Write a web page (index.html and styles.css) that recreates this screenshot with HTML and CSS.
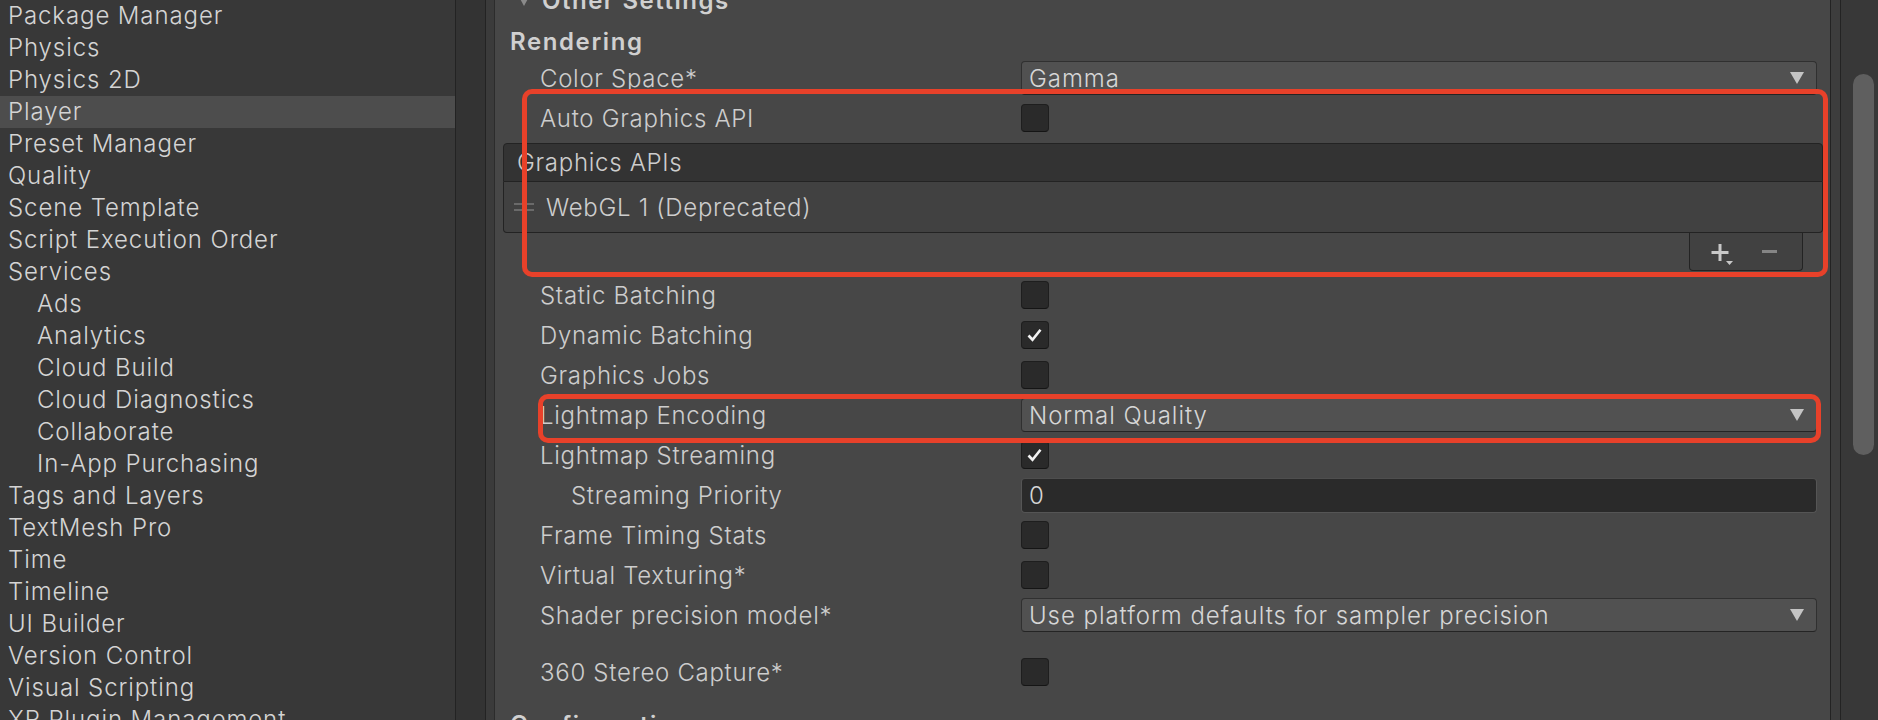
FILE: index.html
```html
<!DOCTYPE html>
<html lang="en">
<head>
<meta charset="utf-8">
<title>Project Settings - Player</title>
<link rel="stylesheet" href="styles.css">
</head>
<body>
<div class="app">
  <nav class="sidebar">
    <div class="item">Package Manager</div>
    <div class="item">Physics</div>
    <div class="item">Physics 2D</div>
    <div class="item selected">Player</div>
    <div class="item">Preset Manager</div>
    <div class="item">Quality</div>
    <div class="item">Scene Template</div>
    <div class="item">Script Execution Order</div>
    <div class="item">Services</div>
    <div class="item sub">Ads</div>
    <div class="item sub">Analytics</div>
    <div class="item sub">Cloud Build</div>
    <div class="item sub">Cloud Diagnostics</div>
    <div class="item sub">Collaborate</div>
    <div class="item sub">In-App Purchasing</div>
    <div class="item">Tags and Layers</div>
    <div class="item">TextMesh Pro</div>
    <div class="item">Time</div>
    <div class="item">Timeline</div>
    <div class="item">UI Builder</div>
    <div class="item">Version Control</div>
    <div class="item">Visual Scripting</div>
    <div class="item">XR Plugin Management</div>
  </nav>
  <div class="gutter"></div>
  <div class="gutter2"></div>
  <main class="inspector">
    <div class="scroll">
      <div class="foldout"><span class="tri"></span>Other Settings</div>
      <div class="section">Rendering</div>

      <div class="row"><span class="label">Color Space*</span><div class="dropdown"><span>Gamma</span><span class="arrow"></span></div></div>
      <div class="row"><span class="label">Auto Graphics API</span><div class="checkbox"></div></div>

      <div class="list">
        <div class="list-head">Graphics APIs</div>
        <div class="list-body">
          <span class="handle"></span><span>WebGL 1 (Deprecated)</span>
        </div>
        <div class="list-foot">
          <span class="plus"><svg width="24" height="24" viewBox="0 0 24 24"><path d="M10 2v17M1.5 10.5h17" stroke="#c8c8c8" stroke-width="3" fill="none"/><path d="M16 19h7l-3.5 4z" fill="#c8c8c8"/></svg></span>
          <span class="minus"></span>
        </div>
      </div>

      <div class="row gap-top"><span class="label">Static Batching</span><div class="checkbox"></div></div>
      <div class="row"><span class="label">Dynamic Batching</span><div class="checkbox checked"><svg width="28" height="28" viewBox="0 0 28 28"><path d="M7.5 14.5l4 4.2 8-10" stroke="#f2f2f2" stroke-width="2.6" fill="none"/></svg></div></div>
      <div class="row"><span class="label">Graphics Jobs</span><div class="checkbox"></div></div>
      <div class="row"><span class="label">Lightmap Encoding</span><div class="dropdown"><span>Normal Quality</span><span class="arrow"></span></div></div>
      <div class="row"><span class="label">Lightmap Streaming</span><div class="checkbox checked"><svg width="28" height="28" viewBox="0 0 28 28"><path d="M7.5 14.5l4 4.2 8-10" stroke="#f2f2f2" stroke-width="2.6" fill="none"/></svg></div></div>
      <div class="row indent"><span class="label">Streaming Priority</span><div class="textfield">0</div></div>
      <div class="row"><span class="label">Frame Timing Stats</span><div class="checkbox"></div></div>
      <div class="row"><span class="label">Virtual Texturing*</span><div class="checkbox"></div></div>
      <div class="row"><span class="label">Shader precision model*</span><div class="dropdown"><span>Use platform defaults for sampler precision</span><span class="arrow"></span></div></div>
      <div class="row gap-big"><span class="label">360 Stereo Capture*</span><div class="checkbox"></div></div>

      <div class="section config">Configuration</div>
    </div>
  </main>
  <div class="rgutter"></div>
  <div class="scrollbar"><div class="thumb"></div></div>

  <div class="mark mark1"></div>
  <div class="mark mark2"></div>
</div>
</body>
</html>
```

FILE: styles.css
```css
* { box-sizing: border-box; }
html, body { margin: 0; padding: 0; }
body {
  width: 1878px;
  height: 720px;
  overflow: hidden;
  background: #383838;
  font-family: "Inter", "Noto Sans CJK JP", "Liberation Sans", sans-serif;
  font-size: 24px;
  font-weight: 300;
  letter-spacing: 0.7px;
  color: #d0d0d0;
}
.app {
  position: relative;
  display: flex;
  width: 1878px;
  height: 720px;
  overflow: hidden;
}

/* sidebar */
.sidebar {
  width: 456px;
  flex: none;
  background: #383838;
  border-right: 1px solid #232323;
  display: flex;
  flex-direction: column;
}
.item {
  height: 32px;
  flex: none;
  line-height: 32px;
  padding-left: 8px;
  white-space: nowrap;
  letter-spacing: 0.9px;
  color: #d4d4d4;
}
.item.sub { padding-left: 37px; }
.item.selected { background: #4d4d4d; }

.gutter {
  width: 30px;
  flex: none;
  background: #333333;
  border-right: 1px solid #232323;
}
.gutter2 {
  width: 9px;
  flex: none;
  background: #3b3b3b;
  border-right: 1px solid #2c2c2c;
}

/* inspector */
.inspector {
  flex: 1;
  background: #474747;
  overflow: hidden;
}
.scroll {
  margin-top: -20px;
  display: flex;
  flex-direction: column;
}
.foldout {
  height: 40px;
  display: flex;
  align-items: center;
  padding-left: 23px;
  font-weight: 600;
  letter-spacing: 1.5px;
  color: #d0d0d0;
}
.tri {
  width: 0; height: 0;
  border-left: 6px solid transparent;
  border-right: 6px solid transparent;
  border-top: 11px solid #8a8a8a;
  margin-right: 12px;
}
.section {
  height: 38px;
  display: flex;
  align-items: center;
  padding: 4px 0 0 15px;
  font-weight: 600;
  letter-spacing: 1.6px;
  color: #d0d0d0;
}
.section.config { margin-top: 10px; height: 40px; }

.row {
  height: 40px;
  flex: none;
  display: grid;
  grid-template-columns: 481px 1fr;
  align-items: center;
  padding: 0 13px 0 45px;
}
.row.indent { grid-template-columns: 450px 1fr; padding-left: 76px; }
.row.gap-top { margin-top: 4px; }
.row.gap-big { margin-top: 17px; }
.label { white-space: nowrap; color: #cdcdcd; }

.dropdown {
  height: 34px;
  background: #515151;
  border: 1px solid #303030;
  border-bottom-color: #242424;
  border-radius: 4px;
  display: flex;
  align-items: center;
  justify-content: space-between;
  padding: 0 12px 0 7px;
  color: #d6d6d6;
  letter-spacing: 0.95px;
  white-space: nowrap;
}
.arrow {
  width: 0; height: 0;
  border-left: 7px solid transparent;
  border-right: 7px solid transparent;
  border-top: 12px solid #c4c4c4;
}
.checkbox {
  width: 28px;
  height: 28px;
  background: #2a2a2a;
  border: 1px solid #1e1e1e;
  border-bottom-color: #151515;
  border-radius: 4px;
  position: relative;
}
.checkbox svg { position: absolute; left: -1px; top: -1px; }
.textfield {
  height: 35px;
  background: #2a2a2a;
  border: 1px solid #555555;
  border-top-color: #4e4e4e;
  border-radius: 4px;
  display: flex;
  align-items: center;
  padding-left: 7px;
  color: #d6d6d6;
}

/* reorderable list */
.list {
  margin: 5px 7px 0 8px;
  display: flex;
  flex-direction: column;
}
.list-head {
  height: 39px;
  background: #333333;
  border: 1px solid #232323;
  border-radius: 4px 4px 0 0;
  display: flex;
  align-items: center;
  padding-left: 13px;
  color: #cdcdcd;
}
.list-body {
  height: 51px;
  background: #414141;
  border: 1px solid #232323;
  border-top: none;
  border-radius: 0 0 4px 4px;
  display: flex;
  align-items: center;
  padding-left: 10px;
  color: #cdcdcd;
}
.handle {
  width: 20px;
  height: 8px;
  border-top: 2px solid #6a6a6a;
  border-bottom: 2px solid #6a6a6a;
  margin-right: 12px;
}
.list-foot {
  align-self: flex-end;
  margin-right: 20px;
  width: 114px;
  height: 38px;
  background: #414141;
  border: 1px solid #232323;
  border-top: none;
  border-radius: 0 0 4px 4px;
  display: flex;
  align-items: center;
  padding-left: 20px;
  gap: 20px;
}
.plus { display: flex; margin-top: 4px; }
.minus {
  width: 15px;
  height: 3px;
  background: #858585;
  margin-left: 8px;
}

/* right edge */
.rgutter {
  width: 11px;
  flex: none;
  background: #3d3d3d;
  border-left: 1px solid #232323;
  border-right: 1px solid #232323;
}
.scrollbar {
  width: 37px;
  flex: none;
  background: #383838;
  padding-left: 12px;
}
.thumb {
  margin-top: 74px;
  width: 21px;
  height: 381px;
  border-radius: 11px;
  background: #5f5f5f;
}

/* annotation overlays */
.mark {
  position: absolute;
  border: 5px solid #e8412a;
  border-radius: 10px;
  pointer-events: none;
}
.mark1 { left: 522px; top: 89px; width: 1306px; height: 188px; }
.mark2 { left: 538px; top: 394px; width: 1283px; height: 49px; }
```
